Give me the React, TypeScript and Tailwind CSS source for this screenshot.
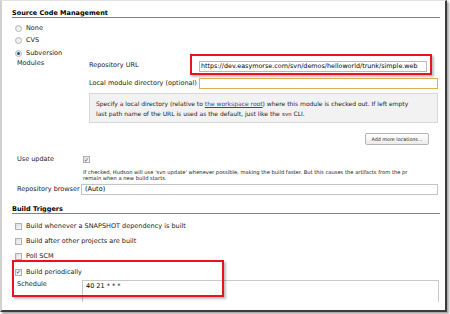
import { ReactNode } from 'react';

const Radio = ({ checked }: { checked?: boolean }) => (
    <span className="flex h-[7px] w-[7px] items-center justify-center rounded-full border border-[#b5b5b5] bg-gradient-to-br from-[#e4e4e4] to-[#fafafa]">
        {checked && <span className="h-[3px] w-[3px] rounded-full bg-[#1d4f86]" />}
    </span>
);

const Check = ({ checked }: { checked?: boolean }) => (
    <span className="flex h-[7px] w-[7px] items-center justify-center border border-[#b0b0b0] bg-gradient-to-br from-[#dedede] to-[#f8f8f8] text-[6px] leading-none text-[#24468a]">
        {checked && '✓'}
    </span>
);

const Heading = ({ children }: { children: ReactNode }) => (
    <div className="h-[8px] w-[428px] border-b border-[#808080] text-[6.5px] font-bold leading-[7px] text-black">
        {children}
    </div>
);

const OptionRow = ({ children, radio, checked, h }: { children: ReactNode; radio?: boolean; checked?: boolean; h: string }) => (
    <div className={`flex items-center gap-[4px] pl-[3px] ${h}`}>
        {radio ? <Radio checked={checked} /> : <Check checked={checked} />}
        <span>{children}</span>
    </div>
);

export default function App() {
    return (
        <div className="h-[314px] w-[450px] bg-white text-[6.5px] text-[#222]" style={{ fontFamily: '"DejaVu Sans", Verdana, sans-serif' }}>
            <div className="relative h-[312px] w-[447px] border-t border-l-2 border-r-2 border-b-2 border-t-[#e2e2e2] border-l-[#d0d0d0] border-r-[#3c3c3c] border-b-[#3c3c3c] shadow-[2px_2px_2px_rgba(0,0,0,0.35)]">
                <div className="pl-[10px] pt-[9px]">
                    <Heading>Source Code Management</Heading>

                    <div className="mt-[4px] leading-[7px]">
                        <OptionRow radio h="h-[12px]">None</OptionRow>
                        <OptionRow radio h="h-[13px]">CVS</OptionRow>
                        <OptionRow radio checked h="h-[12px]">Subversion</OptionRow>
                    </div>

                    {/* Modules */}
                    <div className="flex pl-[5px] leading-[7px]">
                        <div className="w-[72px] pt-[1px]">Modules</div>
                        <div className="flex flex-col">
                            <div className="flex h-[13px] items-start">
                                <div className="w-[110px] pt-[3px]">Repository URL</div>
                                <div className="mt-[2px] flex h-[11px] w-[228px] items-center overflow-hidden whitespace-nowrap border border-[#b8b8b8] pl-[1px] text-[6.4px] text-black">
                                    https://dev.easymorse.com/svn/demos/helloworld/trunk/simple.web
                                </div>
                            </div>
                            <div className="mt-[6px] flex items-center">
                                <div className="w-[110px]">Local module directory (optional)</div>
                                <div className="h-[11px] w-[239px] border border-[#e3ad58]" />
                            </div>
                            <div className="mt-[4px] h-[30px] w-[349px] border border-[#d8d8d8] bg-[#f2f2f2] pl-[6px] pt-[5px] text-[6px] leading-[10px]">
                                <div className="whitespace-nowrap">
                                    Specify a local directory (relative to <span className="text-[#2a4aa0] underline">the workspace root</span>) where this module is checked out. If left empty
                                </div>
                                <div className="whitespace-nowrap">
                                    last path name of the URL is used as the default, just like the <span className="font-mono text-[5.5px]">svn</span> CLI.
                                </div>
                            </div>
                            <div className="mt-[10px] flex w-[349px] justify-end pr-[9px]">
                                <div className="flex h-[12px] w-[64px] items-center justify-center rounded-[2px] border border-[#b5b5b5] bg-gradient-to-b from-white to-[#ececec] text-[4.8px] text-[#222]">
                                    Add more locations...
                                </div>
                            </div>
                        </div>
                    </div>

                    {/* Use update */}
                    <div className="mt-[11px] flex h-[7px] items-center pl-[5px]">
                        <div className="w-[66px]">Use update</div>
                        <Check checked />
                    </div>
                    <div className="mt-[7px] pl-[71px] text-[5.2px] leading-[5.5px] text-[#222]">
                        <div className="whitespace-nowrap">If checked, Hudson will use 'svn update' whenever possible, making the build faster. But this causes the artifacts from the pr</div>
                        <div className="whitespace-nowrap">remain when a new build starts.</div>
                    </div>
                    <div className="mt-[3px] flex items-center pl-[5px]">
                        <div className="w-[64px] whitespace-nowrap">Repository browser</div>
                        <div className="flex h-[11px] w-[357px] items-center border border-[#c4c4c4] pl-[3px] text-black">(Auto)</div>
                    </div>

                    <div className="mt-[11px]">
                        <Heading>Build Triggers</Heading>
                    </div>

                    <div className="mt-[5px] leading-[7px]">
                        <OptionRow h="h-[15px]">Build whenever a SNAPSHOT dependency is built</OptionRow>
                        <OptionRow h="h-[15px]">Build after other projects are built</OptionRow>
                        <OptionRow h="h-[15px]">Poll SCM</OptionRow>
                        <OptionRow checked h="h-[16px]">Build periodically</OptionRow>
                    </div>
                    <div className="flex pl-[5px]">
                        <div className="w-[65px] pt-[1px] leading-[7px]">Schedule</div>
                        <div className="h-[22px] w-[357px] border border-b-0 border-[#c8c8c8] pl-[3px] pt-[2px] leading-[7px] text-black">40 21 * * *</div>
                    </div>
                </div>

                {/* annotations */}
                <div className="absolute left-[188px] top-[53px] h-[21px] w-[242px] border-2 border-[#e8141b] shadow-[2px_2px_2px_rgba(0,0,0,0.25)]" />
                <div className="absolute left-[10px] top-[259px] h-[37px] w-[212px] border-2 border-[#e8141b] shadow-[2px_2px_2px_rgba(0,0,0,0.25)]" />
            </div>
        </div>
    );
}
